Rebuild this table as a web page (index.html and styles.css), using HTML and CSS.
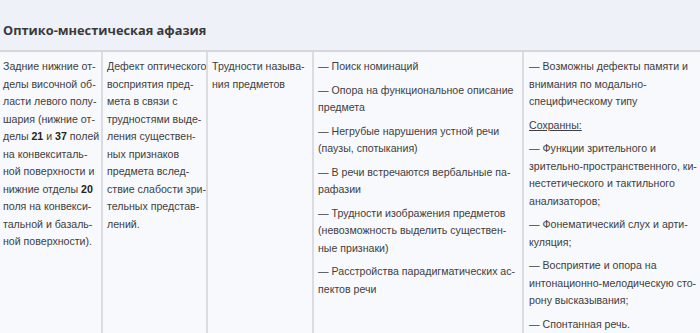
FILE: index.html
```html
<!DOCTYPE html>
<html lang="ru">
<head>
<meta charset="utf-8">
<title>Оптико-мнестическая афазия</title>
<link rel="stylesheet" href="styles.css">
</head>
<body>
<div class="page">
  <h2 class="title">Оптико-мнестическая афазия</h2>
  <table class="grid">
    <colgroup>
      <col class="w1">
      <col class="w2">
      <col class="w3">
      <col class="w4">
      <col class="w5">
    </colgroup>
    <tr>
      <td class="c1">
        <p>Задние нижние от-<br>делы височной об-<br>ласти левого полу-<br>шария (нижние от-<br>делы <b>21</b> и <b>37</b> полей<br>на конвекситаль-<br>ной поверхности и<br>нижние отделы <b>20</b><br>поля на конвекси-<br>тальной и базаль-<br>ной поверхности).</p>
      </td>
      <td>
        <p>Дефект оптического<br>восприятия пред-<br>мета в связи с<br>трудностями выде-<br>ления существен-<br>ных признаков<br>предмета вслед-<br>ствие слабости зри-<br>тельных представ-<br>лений.</p>
      </td>
      <td>
        <p>Трудности называ-<br>ния предметов</p>
      </td>
      <td>
        <p>— Поиск номинаций</p>
        <p>— Опора на функциональное описание<br>предмета</p>
        <p>— Негрубые нарушения устной речи<br>(паузы, спотыкания)</p>
        <p>— В речи встречаются вербальные па-<br>рафазии</p>
        <p>— Трудности изображения предметов<br>(невозможность выделить существен-<br>ные признаки)</p>
        <p>— Расстройства парадигматических ас-<br>пектов речи</p>
      </td>
      <td class="c5">
        <p>— Возможны дефекты памяти и<br>внимания по модально-<br>специфическому типу</p>
        <p class="u">Сохранны:</p>
        <p>— Функции зрительного и<br>зрительно-пространственного, ки-<br>нестетического и тактильного<br>анализаторов;</p>
        <p>— Фонематический слух и арти-<br>куляция;</p>
        <p>— Восприятие и опора на<br>интонационно-мелодическую сто-<br>рону высказывания;</p>
        <p>— Спонтанная речь.</p>
      </td>
    </tr>
  </table>
</div>
</body>
</html>
```
FILE: styles.css
```css
html, body {
  margin: 0;
  padding: 0;
  background: #eef1f8;
  overflow: hidden;
}
.page {
  width: 700px;
  height: 333px;
  overflow: hidden;
  background: #eef1f8;
}
.title {
  margin: 0;
  padding: 21px 0 0 3px;
  height: 29px;
  box-sizing: content-box;
  font-family: "Open Sans", sans-serif;
  font-weight: 700;
  font-size: 12.8px;
  line-height: 18px;
  color: #3a3a3a;
  border-bottom: 2px solid #d5d7dc;
}
.grid {
  border-collapse: collapse;
  table-layout: fixed;
  width: 720px;
  height: 400px;
  background: #f8f9fc;
  font-family: "Liberation Sans", Arial, sans-serif;
  font-size: 10.6px;
  line-height: 17.5px;
  color: #404040;
}
.w1 { width: 102px; }
.w2 { width: 105px; }
.w3 { width: 106px; }
.w4 { width: 210px; }
.w5 { width: 197px; }
.grid td {
  vertical-align: top;
  padding: 6px 3px 0 4px;
  border-left: 2px solid #dadce1;
  white-space: nowrap;
  overflow: hidden;
}
.grid td.c1 { border-left: none; padding-left: 3px; }
.grid td.c5 { padding-left: 5px; }
.grid td p { margin: 0 0 6px 0; }
.grid td p.u { text-decoration: underline; }
.grid b { font-weight: 700; color: #222; }
```
